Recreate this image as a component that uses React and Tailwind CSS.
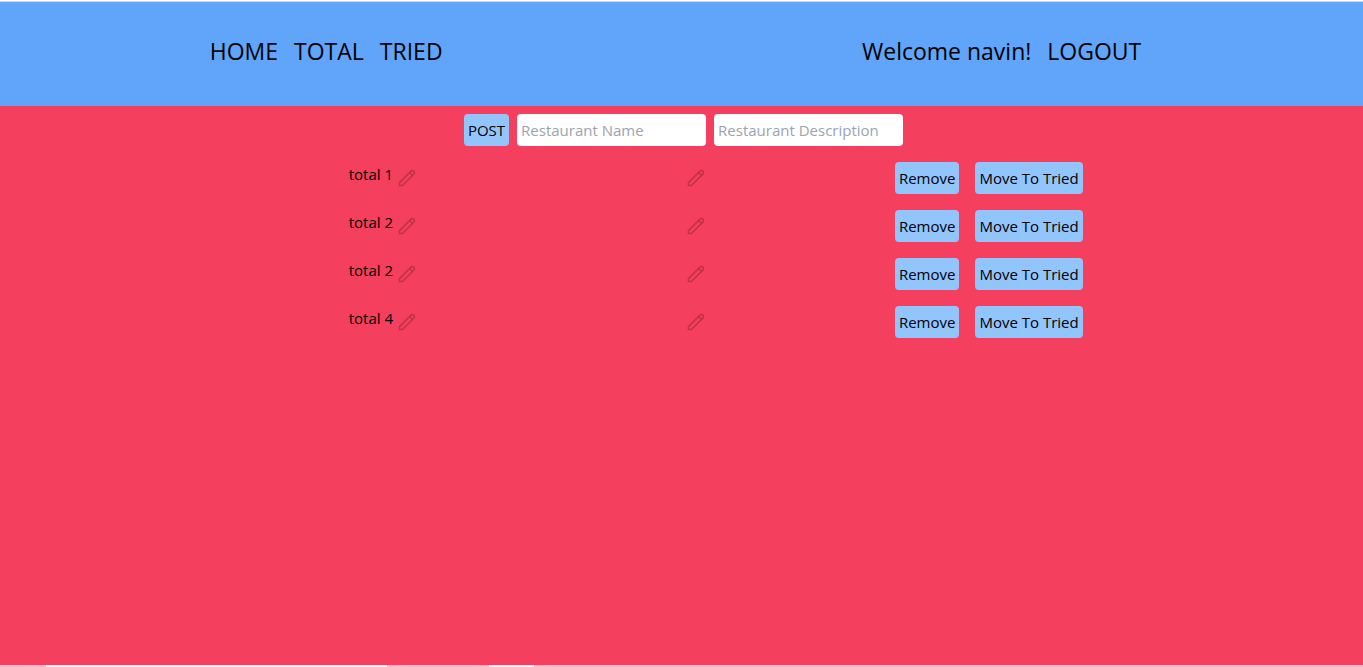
import { HiOutlinePencil } from "react-icons/hi";

const restaurants = ["total 1", "total 2", "total 2", "total 4"];

const control = "h-8 rounded bg-[#93c5fd] px-1 whitespace-nowrap";
const field = "h-8 w-[189px] rounded bg-white px-1 placeholder:text-[#9ca3af]";

function EditButton({ label }) {
  return (
    <button type="button" aria-label={label} className="mt-1.5 h-5 w-5 text-black/20">
      <HiOutlinePencil className="h-5 w-5" />
    </button>
  );
}

function Row({ name }) {
  return (
    <li className="grid h-12 grid-cols-[339fr_207fr_476fr] items-start">
      <div className="flex gap-1 pl-2">
        <span>{name}</span>
        <EditButton label={`Edit name of ${name}`} />
      </div>
      <div className="flex pl-1.5">
        <EditButton label={`Edit description of ${name}`} />
      </div>
      <div className="flex gap-4 pl-2">
        <button type="button" className={control}>Remove</button>
        <button type="button" className={control}>Move To Tried</button>
      </div>
    </li>
  );
}

export default function App() {
  return (
    <div className="flex min-h-screen flex-col border-t border-white bg-[#f43f5e] font-['Open_Sans',sans-serif] text-[15px] leading-6 text-black">
      <header className="flex h-[105px] items-center justify-around border-t border-gray-300 bg-[#60a5fa] pr-3 pb-1.5 text-[23px] leading-8">
        <nav className="flex gap-4">
          <a href="#home">HOME</a>
          <a href="#total">TOTAL</a>
          <a href="#tried">TRIED</a>
        </nav>
        <div className="flex gap-4">
          <span>Welcome navin!</span>
          <a href="#logout">LOGOUT</a>
        </div>
      </header>
      <main className="grow">
        <form className="flex justify-center gap-2 pt-2 pl-1" onSubmit={(e) => e.preventDefault()}>
          <button type="submit" className={control}>POST</button>
          <input aria-label="Restaurant Name" placeholder="Restaurant Name" className={field} />
          <input aria-label="Restaurant Description" placeholder="Restaurant Description" className={field} />
        </form>
        <ul className="mt-4 ml-[25%]">
          {restaurants.map((name, i) => (
            <Row key={i} name={name} />
          ))}
        </ul>
      </main>
      <div className="flex h-[2px] bg-[#fcc5cf]">
        <div className="ml-[3.4%] w-[25%] bg-white" />
        <div className="ml-[7.5%] w-[3.3%] bg-white" />
      </div>
    </div>
  );
}
